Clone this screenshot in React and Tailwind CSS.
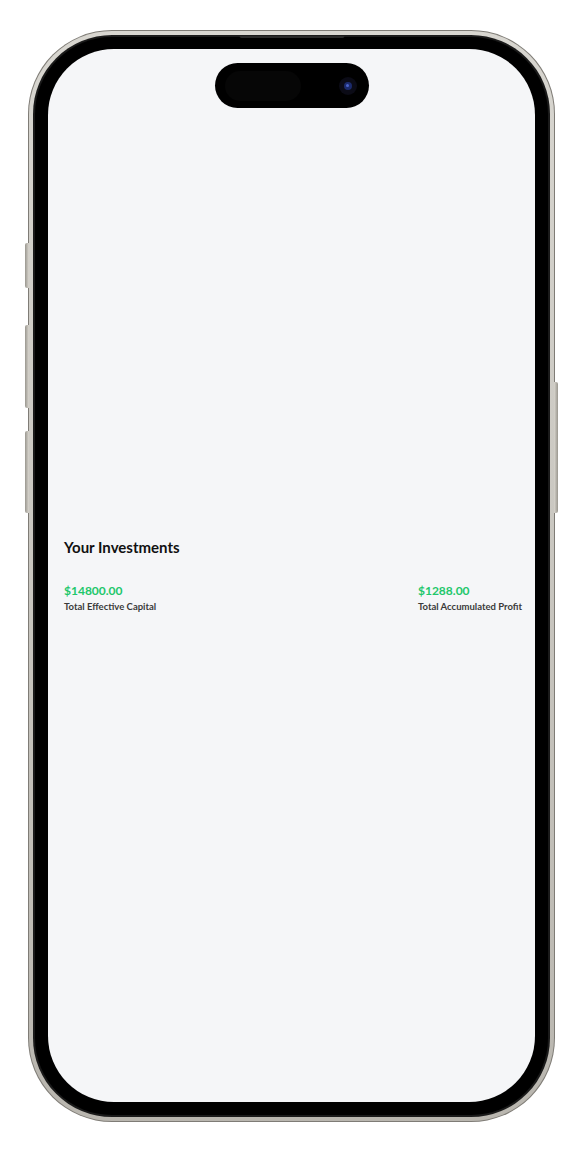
import React from 'react'

const STATS = [
  { value: '$14800.00', label: 'Total Effective Capital' },
  { value: '$1288.00', label: 'Total Accumulated Profit' },
]

function DynamicIsland() {
  return (
    <div className="absolute left-1/2 top-[14px] -translate-x-1/2 w-[154px] h-[45px] rounded-full bg-black flex items-center pl-[10px] pr-[12px] justify-between">
      <div className="w-[76px] h-[30px] rounded-full bg-[#060606]" />
      <div className="w-[18px] h-[18px] rounded-full bg-[#0b0b16] flex items-center justify-center">
        <div className="w-[8px] h-[8px] rounded-full bg-[#1b2a6b] flex items-center justify-center">
          <div className="w-[3px] h-[3px] rounded-full bg-[#4b63c9]" />
        </div>
      </div>
    </div>
  )
}

export default function App() {
  return (
    <div className="w-[586px] h-[1152px] bg-white pt-[30px] pl-[28px]" style={{ fontFamily: 'Lato, "Noto Sans", sans-serif' }}>
      <div className="relative w-[527px] h-[1092px]">
        {/* side buttons */}
        <div className="absolute -left-[3px] top-[213px] w-[4px] h-[45px] rounded-l-[2px] bg-gradient-to-r from-[#9a978f] to-[#d9d6cf]" />
        <div className="absolute -left-[3px] top-[295px] w-[4px] h-[83px] rounded-l-[2px] bg-gradient-to-r from-[#9a978f] to-[#d9d6cf]" />
        <div className="absolute -left-[3px] top-[401px] w-[4px] h-[82px] rounded-l-[2px] bg-gradient-to-r from-[#9a978f] to-[#d9d6cf]" />
        <div className="absolute -right-[3px] top-[352px] w-[4px] h-[131px] rounded-r-[2px] bg-gradient-to-l from-[#9a978f] to-[#d9d6cf]" />

        {/* titanium frame */}
        <div className="w-full h-full rounded-[84px] bg-[#7f7c76] p-[1px]">
          <div className="w-full h-full rounded-[83px] bg-gradient-to-b from-[#d8d6d0] to-[#b9b6af] p-[4px]">
            <div className="relative w-full h-full rounded-[79px] bg-[#1a1a1a] p-[2px]">
              <div className="relative w-full h-full rounded-[77px] bg-black p-[13px] pt-[12px]">
                <div className="absolute left-1/2 -top-[1px] -translate-x-1/2 w-[105px] h-[2px] rounded-b-full bg-[#2a2a2a]" />
                <div className="relative w-full h-full rounded-[66px] bg-[#f5f6f8] flex flex-col justify-center pl-[16px] pr-[13px]">
                  <DynamicIsland />
                  <h2 className="text-[15px] leading-[20px] font-bold text-[#111111]">Your Investments</h2>
                  <div className="mt-[26px] flex justify-between">
                    {STATS.map((s) => (
                      <div key={s.label} className="flex flex-col">
                        <span className="text-[12px] leading-[16px] font-bold text-[#22c76b]">{s.value}</span>
                        <span className="mt-[1px] text-[9.5px] leading-[14px] font-bold text-[#3a3a3a]">{s.label}</span>
                      </div>
                    ))}
                  </div>
                </div>
              </div>
            </div>
          </div>
        </div>
      </div>
    </div>
  )
}
